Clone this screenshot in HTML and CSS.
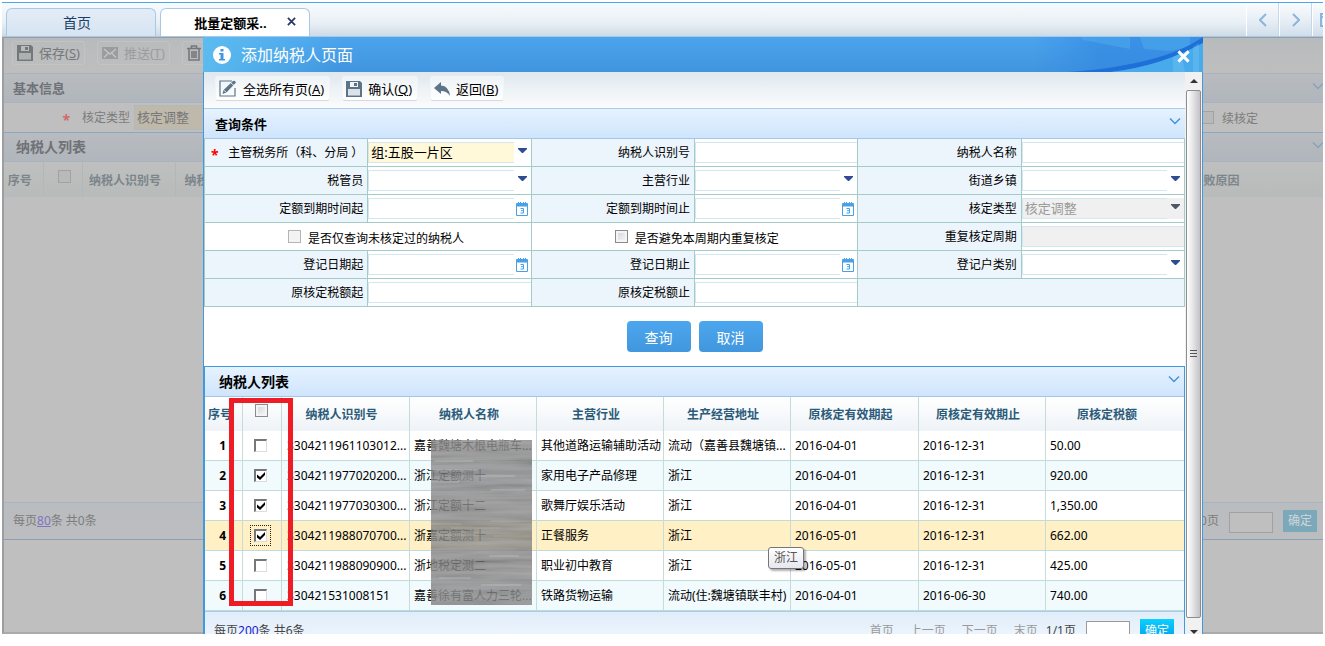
FILE: index.html
```html
<!DOCTYPE html>
<html lang="zh-CN">
<head>
<meta charset="utf-8">
<title>批量定额采集</title>
<link rel="stylesheet" href="styles.css">
</head>
<body>
<svg class="defs" aria-hidden="true">
  <symbol id="i-save" viewBox="0 0 16 16"><path fill="currentColor" fill-rule="evenodd" d="M0 0h14l2 2v14H0zM4 1v5h8V1zM2 8v6.500h12V8z"/><path fill="currentColor" d="M8 2h3v3H8z"/><path fill="currentColor" fill-opacity=".18" d="M2 8h12v6.500H2z"/></symbol>
  <symbol id="i-mail" viewBox="0 0 16 12"><path fill="currentColor" d="M0 0h16v12H0z"/><path fill="none" stroke="#c4c4c4" stroke-width="1.4" d="M2 2l6 5 6-5M2 10.500l4-4M14 10.500l-4-4"/></symbol>
  <symbol id="i-trash" viewBox="0 0 14 16"><path fill="none" stroke="currentColor" stroke-width="1.600" d="M0 3.500h14M4.500 3V1h5v2M2 4v11h10V4M5 6v7M7 6v7M9 6v7"/></symbol>
  <symbol id="i-chev" viewBox="0 0 12 8"><path fill="none" stroke="currentColor" stroke-width="1.500" d="M1 1.500l5 5 5-5"/></symbol>
  <symbol id="i-drop" viewBox="0 0 9 5"><path fill="currentColor" d="M0 0h9v1L5 5H4L0 1z"/></symbol>
  <symbol id="i-cal" viewBox="0 0 12 14"><path fill="#4aa0e6" d="M0 2q0-1 1-1h1V0h1v1h1V0h1v1h2V0h1v1h1V0h1v1h1q1 0 1 1v11q0 1-1 1H1q-1 0-1-1z"/><path fill="#fff" d="M1 4.500h10V13H1z"/><path fill="none" stroke="#4aa0e6" d="M4.500 6.500h3v4.500h-3M5 8.700h2.500"/></symbol>
  <symbol id="i-edit" viewBox="0 0 18 17"><path fill="none" stroke="currentColor" stroke-width="1.200" d="M13 1H1v15h15V8"/><path fill="currentColor" d="M3.500 14l1-4 9.500-9q2-1 3 1.500L7.500 12.500z"/><path stroke="#fff" stroke-width=".8" d="M4.500 10l3 2.500M12 3l3 2.500"/></symbol>
  <symbol id="i-back" viewBox="0 0 16 14"><path fill="currentColor" d="M7 0v3.500q8 .5 9 10.500-3-5-9-5V12L0 6z"/></symbol>
</svg>

<div class="app">
  <nav class="tabs">
    <button class="tab">首页</button>
    <button class="tab active"><span>批量定额采..</span>
      <svg class="tab-x" viewBox="0 0 10 10"><path stroke="#2a3a64" stroke-width="2" d="M1 1l8 8M9 1L1 9"/></svg></button>
    <div class="tab-nav">
      <button aria-label="向左"><svg viewBox="0 0 8 14"><path d="M7 1L1 7l6 6"/></svg></button>
      <button aria-label="向右"><svg viewBox="0 0 8 14"><path d="M1 1l6 6-6 6"/></svg></button>
      <button class="cut" aria-label="窗口"><svg viewBox="0 0 12 14"><path d="M1 1h10v12H1zM1 4h10"/></svg></button>
    </div>
  </nav>

  <main class="page">
    <div class="page-tools">
      <button><svg width="16" height="16"><use href="#i-save"/></svg><span>保存(<u>S</u>)</span></button>
      <button class="off"><svg width="16" height="12"><use href="#i-mail"/></svg><span>推送(<u>T</u>)</span></button>
      <button aria-label="删除"><svg width="14" height="16"><use href="#i-trash"/></svg></button>
    </div>
    <h2 class="page-head small">基本信息<svg width="12" height="8"><use href="#i-chev"/></svg></h2>
    <div class="page-form">
      <label for="bg-type"><b class="star">*</b>核定类型</label>
      <input id="bg-type" value="核定调整">
      <label class="cont"><input type="checkbox" class="box">续核定</label>
    </div>
    <h2 class="page-head list-head">纳税人列表<svg width="12" height="8"><use href="#i-chev"/></svg></h2>
    <table class="page-table">
      <colgroup><col class="b1"><col class="b2"><col class="b3"><col class="b4"><col><col class="b5"></colgroup>
      <tr><th>序号</th><th><input type="checkbox" class="box" aria-label="全选"></th><th>纳税人识别号</th><th>纳税人名称</th><th></th><th class="last">失败原因</th></tr>
    </table>
    <div class="page-blank"></div>
    <div class="page-pager">
      <span>每页<a href="#">80</a>条 共0条</span>
      <label for="bg-go">0/0页</label><input id="bg-go"><button>确定</button>
    </div>
    <div class="page-rest"></div>
  </main>

  <section class="dialog">
    <header class="title">
      <svg class="title-art" viewBox="0 0 170 35" preserveAspectRatio="none">
        <linearGradient id="fade"><stop offset="0" stop-color="#2f85e0" stop-opacity="0"/><stop offset=".4" stop-color="#2f85e0" stop-opacity=".6"/></linearGradient>
        <path fill="url(#fade)" d="M0 0h170v35H0z"/>
        <path fill="#56b3f0" fill-opacity=".4" d="M48 0h49v12L50 3zM107 0h50v10l-20 4-26-2z"/>
        <path fill="#1f6fd8" d="M36 35Q130 28 170 0v6Q128 29 78 35z"/>
        <path fill="#4cb2ee" fill-opacity=".8" d="M78 35Q128 29 170 6v29z"/>
        <path fill="#8fd4f8" fill-opacity=".25" d="M140 20l8-4 4 19h-12zM160 10l6-4v29h-6z"/>
      </svg>
      <svg class="info" viewBox="0 0 18 18"><circle cx="9" cy="9" r="9" fill="#fff"/><path fill="#3f97df" d="M7.500 3h3v2.500h-3zM6 7h4.500v6H12v1.500H6V13h1.500V8.500H6z"/></svg>
      <h1>添加纳税人页面</h1>
      <button class="close" aria-label="关闭"><svg viewBox="0 0 14 14"><path stroke="#fff" stroke-width="3.200" d="M1.500 1.500l11 11M12.500 1.500l-11 11"/></svg></button>
    </header>
    <div class="frame">
      <div class="content">
        <div class="tools">
          <button><svg width="18" height="17"><use href="#i-edit"/></svg><span>全选所有页(<u>A</u>)</span></button>
          <button><svg width="16" height="16"><use href="#i-save"/></svg><span>确认(<u>Q</u>)</span></button>
          <button><svg width="16" height="14"><use href="#i-back"/></svg><span>返回(<u>B</u>)</span></button>
        </div>
        <h2 class="head">查询条件<svg width="12" height="8"><use href="#i-chev"/></svg></h2>

        <form class="query">
          <label class="lab" for="q1"><b class="star">*</b>主管税务所（科、分局 ）</label>
          <div class="fld need"><select id="q1"><option>组:五股一片区</option></select><svg class="drop"><use href="#i-drop"/></svg></div>
          <label class="lab" for="q2">纳税人识别号</label><div class="fld"><input id="q2"></div>
          <label class="lab" for="q3">纳税人名称</label><div class="fld"><input id="q3"></div>

          <label class="lab" for="q4">税管员</label><div class="fld"><select id="q4"><option></option></select><svg class="drop"><use href="#i-drop"/></svg></div>
          <label class="lab" for="q5">主营行业</label><div class="fld"><select id="q5"><option></option></select><svg class="drop"><use href="#i-drop"/></svg></div>
          <label class="lab" for="q6">街道乡镇</label><div class="fld"><select id="q6"><option></option></select><svg class="drop"><use href="#i-drop"/></svg></div>

          <label class="lab" for="q7">定额到期时间起</label><div class="fld"><input id="q7"><svg class="cal"><use href="#i-cal"/></svg></div>
          <label class="lab" for="q8">定额到期时间止</label><div class="fld"><input id="q8"><svg class="cal"><use href="#i-cal"/></svg></div>
          <label class="lab" for="q9">核定类型</label><div class="fld dis"><select id="q9" disabled><option>核定调整</option></select><svg class="drop"><use href="#i-drop"/></svg></div>

          <label class="chk"><input type="checkbox" class="box pale">是否仅查询未核定过的纳税人</label>
          <label class="chk"><input type="checkbox" class="box">是否避免本周期内重复核定</label>
          <label class="lab" for="q10">重复核定周期</label><div class="fld dis"><input id="q10" disabled></div>

          <label class="lab" for="q11">登记日期起</label><div class="fld"><input id="q11"><svg class="cal"><use href="#i-cal"/></svg></div>
          <label class="lab" for="q12">登记日期止</label><div class="fld"><input id="q12"><svg class="cal"><use href="#i-cal"/></svg></div>
          <label class="lab" for="q13">登记户类别</label><div class="fld"><select id="q13"><option></option></select><svg class="drop"><use href="#i-drop"/></svg></div>

          <label class="lab" for="q14">原核定税额起</label><div class="fld"><input id="q14"></div>
          <label class="lab" for="q15">原核定税额止</label><div class="fld"><input id="q15"></div>
          <div class="void"></div>
        </form>

        <div class="actions"><button>查询</button><button>取消</button></div>

        <div class="list">
          <h2 class="head big">纳税人列表<svg width="12" height="8"><use href="#i-chev"/></svg></h2>
          <div class="grid">
            <table>
              <colgroup><col class="c1"><col class="c2"><col class="c3"><col class="c4"><col class="c4"><col class="c4"><col class="c3"><col class="c4"><col></colgroup>
              <thead><tr><th class="no">序号</th><th class="pick"><input type="checkbox" class="box" aria-label="全选"></th><th>纳税人识别号</th><th>纳税人名称</th><th>主营行业</th><th>生产经营地址</th><th>原核定有效期起</th><th>原核定有效期止</th><th>原核定税额</th></tr></thead>
              <tbody>
                <tr><td>1</td><td><input type="checkbox" aria-label="第1行"></td><td>3304211961103012...</td><td>嘉善魏塘木根电瓶车...</td><td>其他道路运输辅助活动</td><td>流动（嘉善县魏塘镇...</td><td>2016-04-01</td><td>2016-12-31</td><td>50.00</td></tr>
                <tr><td>2</td><td><input type="checkbox" checked aria-label="第2行"></td><td>3304211977020200...</td><td>浙江定额测十</td><td>家用电子产品修理</td><td>浙江</td><td>2016-04-01</td><td>2016-12-31</td><td>920.00</td></tr>
                <tr><td>3</td><td><input type="checkbox" checked aria-label="第3行"></td><td>3304211977030300...</td><td>浙江定额十二</td><td>歌舞厅娱乐活动</td><td>浙江</td><td>2016-04-01</td><td>2016-12-31</td><td>1,350.00</td></tr>
                <tr class="hot"><td>4</td><td><input type="checkbox" class="focus" checked aria-label="第4行"></td><td>3304211988070700...</td><td>浙嘉定额测十</td><td>正餐服务</td><td>浙江</td><td>2016-05-01</td><td>2016-12-31</td><td>662.00</td></tr>
                <tr><td>5</td><td><input type="checkbox" aria-label="第5行"></td><td>3304211988090900...</td><td>浙地税定测二</td><td>职业初中教育</td><td>浙江</td><td>2016-05-01</td><td>2016-12-31</td><td>425.00</td></tr>
                <tr><td>6</td><td><input type="checkbox" aria-label="第6行"></td><td>330421531008151</td><td>嘉善徐有富人力三轮...</td><td>铁路货物运输</td><td>流动(住:魏塘镇联丰村)</td><td>2016-04-01</td><td>2016-06-30</td><td>740.00</td></tr>
              </tbody>
            </table>
            <svg class="smear" aria-hidden="true">
              <filter id="streak" x="0" y="0" width="100%" height="100%"><feTurbulence type="fractalNoise" baseFrequency="0.012 0.16" numOctaves="3" seed="8"/><feColorMatrix values="1.1 0 0 0 -.05  1.1 0 0 0 -.05  1.1 0 0 0 -.05  0 0 0 0 1"/></filter>
              <rect width="100%" height="100%" fill="#787878" fill-opacity=".8"/>
              <rect width="100%" height="100%" filter="url(#streak)" opacity=".22"/>
              <path fill="none" stroke="#c6bd9c" stroke-opacity=".5" d="M0 84h30M20 88h50M60 81h42M8 95h40M62 96h40"/>
              <path fill="none" stroke="#ddd" stroke-opacity=".4" d="M4 21h38M2 30h44M48 36h36M0 42h28M60 50h34M58 116h30M8 138h32M50 145h40"/>
            </svg>
            <div class="mark"></div>
            <div class="tip">浙江</div>
          </div>
          <div class="pager">
            <span class="count">每页<a href="#">200</a>条 共6条</span>
            <button class="link">首页</button><button class="link">上一页</button><button class="link">下一页</button><button class="link">末页</button>
            <label for="go">1/1页</label><input id="go"><button class="ok">确定</button>
          </div>
        </div>
      </div>
      <div class="scroll"><i class="up"></i><div class="thumb"><i></i></div><i class="down"></i></div>
    </div>
  </section>
</div>
</body>
</html>
```
FILE: styles.css
```css
* { box-sizing: border-box; }
body, h1, h2 { margin: 0; }
body, button, input, select { font-family: "Noto Sans", "Noto Sans CJK SC", sans-serif; font-size: 12px; }
body { background: #fff; color: #000; line-height: 18px; }
button { border: 0; padding: 0; background: none; color: inherit; display: flex; align-items: center; line-height: 18px; white-space: nowrap; }
input, select { margin: 0; border-radius: 0; outline: 0; min-width: 0; }
.defs { display: none; }

.app { position: relative; display: flex; flex-direction: column; height: calc(100vh - 12px); margin: 0 2px; padding-top: 2px; }

/* tab strip */
.tabs { display: flex; align-items: flex-end; gap: 4px; height: 35px; flex: none; padding-left: 4px; border-top: 1px solid #4fa5ec; border-bottom: 1px solid #a5c9e8; background: linear-gradient(#f7fbfe, #e9f0f5 60%, #cddbe7); }
.tab { width: 150px; height: 28px; justify-content: center; padding-left: 0; padding-right: 8px; font-size: 14px; color: #1d3f66; border: 1px solid #a9c8e6; border-bottom: 0; border-radius: 6px 6px 0 0; background: linear-gradient(#e3edf7, #d6e3f1); }
.tab.active { background: #fff; color: #000; font-weight: 700; font-size: 13px; gap: 20px; padding: 0 0 0 20px; }
.tab-x { width: 9px; height: 9px; margin-bottom: 3px; }
.tab-nav { display: flex; align-self: stretch; margin-left: auto; }
.tab-nav button { width: 33px; justify-content: center; border-left: 1px solid #fff; border-right: 1px solid #c5d8ea; background: linear-gradient(#fafcfe, #e4ecf3 60%, #d0deec); }
.tab-nav svg { width: 8px; height: 14px; fill: none; stroke: #8db4dd; stroke-width: 2; }
.tab-nav .cut { width: 11px; overflow: hidden; justify-content: flex-start; padding-left: 7px; border-right: 0; }
.tab-nav .cut svg { width: 12px; flex: none; }

/* dimmed page below the dialog */
.page { flex: 1; display: flex; flex-direction: column; min-height: 0; background: #bfbfbf; color: #7c7c7c; border-left: 2px solid #9c9fa2; border-top: 1px solid #9c9c9c; border-bottom: 2px solid #aaa; overflow: hidden; }
.page-tools { display: flex; align-items: center; gap: 12px; height: 35px; padding: 0 0 5px 8px; background: linear-gradient(#b8bbbd, #bebebe); flex: none; }
.page-tools button { height: 24px; gap: 6px; padding: 0 4px; font-size: 13px; color: #75787b; border: 1px solid #c3c3c3; border-radius: 3px; }
.page-tools .off { color: #9c9c9c; }
.page-head { display: flex; justify-content: space-between; align-items: center; height: 30px; flex: none; padding-left: 9px; font-size: 13px; color: #6f7276; border-top: 1px solid #abb3bd; border-bottom: 1px solid #a9b2bd; background: linear-gradient(#b8bbbf, #b0b6bc); overflow: hidden; }
.page-head svg { color: #88a3ba; margin: -4px -1px 0 0; }
.page-head.list-head { padding-left: 12px; font-size: 14px; border-top-color: #8ea6bc; }
.page-form { display: flex; align-items: center; height: 29px; flex: none; }
.page-form label { width: 130px; display: flex; justify-content: flex-end; align-items: center; gap: 12px; padding-right: 4px; }
.page-form .star { color: #cf6d6d; }
.page-form > input { width: 160px; height: 25px; padding: 0 2px 2px; font-size: 13px; color: #777; background: #bfb9ac; border: 1px solid #aebabb; }
.page-form .cont { margin-left: auto; width: 122px; justify-content: flex-start; gap: 8px; padding-top: 3px; }
.page-form .cont input { margin-top: -3px; }
.page-table { width: 100%; table-layout: fixed; border-collapse: collapse; height: 35px; flex: none; background: linear-gradient(#bfbfbf, #b8bbbb); color: #7c858b; }
.page-table th { padding: 2px 7px 0 0; border-right: 1px solid #b0b8b8; white-space: nowrap; overflow: hidden; }
.page-table .last { text-align: left; border: 0; }
.page-table .box { display: block; margin: -8px 4px 0 auto; }
.b1 { width: 39px; } .b2 { width: 39px; } .b3 { width: 93px; } .b4 { width: 86px; } .b5 { width: 132px; }
.page-blank { flex: 0 0 306px; border-bottom: 1px solid #abb3bd; }
.page-pager { display: flex; align-items: center; height: 37px; flex: none; padding: 0 6px 0 9px; border-bottom: 1px solid #8ba0b7; background: linear-gradient(#b9bcc0, #bcbdbf); }
.page-pager a { color: #7d75bf; }
.page-pager label { margin-left: auto; }
.page-pager input { width: 44px; height: 21px; margin: 2px 10px 0; border: 1px solid #a1a1a1; background: #bfbfbf; }
.page-pager button { width: 34px; height: 22px; justify-content: center; background: #7ba9ba; color: #cfd6d9; }
.page-rest { flex: 1; }

/* checkboxes */
input[type=checkbox] { appearance: none; position: relative; display: block; width: 13px; height: 13px; flex: none; border: 1px solid #dcdcdc; border-top: 2px solid #777; border-left: 2px solid #777; background: #fff; }
input.box[type=checkbox] { border: 1px solid #8b8b8b; background: linear-gradient(135deg, #cfd3da, #fafafa); box-shadow: inset 0 0 0 2px #f4f4f4; }
input.box.pale[type=checkbox] { border-color: #b4b4b4; background: #f2f2f2; }
.page input.box[type=checkbox] { border-color: #a2a2a2; background: #b9b9b9; box-shadow: none; }
input[type=checkbox]:checked::before { content: ""; position: absolute; inset: 1px; background: #000; clip-path: polygon(0 30%, 38% 62%, 100% 0, 100% 38%, 38% 100%, 0 68%); }
.focus { outline: 1px dotted #222; outline-offset: 3px; }

/* dialog */
.dialog { position: absolute; top: 37px; right: 120px; bottom: -1px; left: 201px; display: flex; flex-direction: column; overflow: hidden; }
.title { position: relative; display: flex; align-items: center; height: 35px; flex: none; padding: 0 13px 0 10px; color: #fff; background: linear-gradient(100deg, #5cbcf0 0, rgba(92, 188, 240, 0) 14%), linear-gradient(#4ba4ee, #4195de); }
.title-art { position: absolute; right: 0; top: 0; width: 170px; height: 35px; }
.info { width: 18px; height: 18px; margin-right: 10px; }
.title h1 { font-size: 16px; font-weight: 400; line-height: 24px; }
.close { position: relative; margin: 3px 0 0 auto; }
.close svg { width: 13px; height: 13px; }
.frame { flex: 1; min-height: 0; display: flex; background: #fff; border-left: 1px solid #4098de; border-right: 1px solid #4098de; }
.content { flex: 1; min-width: 0; overflow: hidden; }
.tools { display: flex; align-items: center; gap: 12px; height: 37px; padding: 0 0 3px 11px; border-bottom: 1px solid #abcbec; background: linear-gradient(#dfe8ee, #fbfcfd); }
.tools button { height: 25px; gap: 6px; padding: 0 5px 0 3px; font-size: 13px; border-radius: 3px; border: 1px solid #f1f5f7; border-bottom-color: #d6dadd; background: linear-gradient(#eef3f6, #fff); }
.tools svg { color: #5b7488; }
.head { display: flex; align-items: center; justify-content: space-between; height: 30px; padding: 0 4px 0 11px; font-size: 13px; border-bottom: 1px solid #a2c7e8; background: linear-gradient(#e6f2ff, #cfe5fc); }
.head svg { color: #3f97de; margin-top: -6px; }
.head.big { padding-left: 14px; font-size: 14px; }

.query { display: grid; grid-template-columns: repeat(6, 1fr); grid-auto-rows: 28px; border-right: 1px solid #a3cbc7; }
.query > * { border-bottom: 1px solid #a3cbc7; border-left: 1px solid #a3cbc7; min-width: 0; }
.lab { display: flex; align-items: center; justify-content: flex-end; padding-right: 4px; background: #edf5fc; white-space: nowrap; }
.star { color: #f00; font-size: 14px; font-weight: 700; line-height: 12px; padding-top: 5px; }
.lab .star { margin: 0 auto 0 6px; }
.fld { display: flex; align-items: center; }
.fld input, .fld select { flex: 1; height: 21px; width: 0; padding: 0 2px; font-size: 13px; color: #000; appearance: none; background: #fff; border: 1px solid #d4e6ee; border-right: 0; }
.fld select { padding-bottom: 2px; }
.need select { background: #fff8d9; }
.fld.dis { background: linear-gradient(#fff 3px, #f0f0f0 3px, #f0f0f0 24px, #fff 24px); }
.dis input, .dis select { background: #f0f0f0; color: #9b9b9b; opacity: 1; }
.drop { width: 9px; height: 5px; margin: -5px 4px 0; color: #2d4c91; }
.dis .drop { color: #4f5563; }
.cal { width: 12px; height: 14px; margin: 0 3px 0 2px; }
.chk { grid-column: span 2; display: flex; align-items: center; gap: 7px; padding-left: 83px; padding-top: 4px; }
.chk input { margin-top: -4px; }
.void { grid-column: span 2; background: #edf5fc; }

.actions { display: flex; justify-content: center; gap: 8px; padding: 14px 0; }
.actions button { width: 64px; height: 31px; justify-content: center; padding-top: 2px; font-size: 14px; color: #fff; border-radius: 4px; background: linear-gradient(#4ca6ef, #4197dc); }

.list { border: 1px solid #4098de; border-bottom: 0; }
.grid { position: relative; }
.grid table { width: 100%; table-layout: fixed; border-collapse: separate; border-spacing: 0; }
.grid th, .grid td { padding: 0 0 0 4px; overflow: hidden; white-space: nowrap; border-right: 1px solid #c5dcd8; }
.grid th:last-child, .grid td:last-child { border-right: 0; }
.grid thead th { height: 34px; padding: 2px 8px 0 0; color: #2b5b79; background: linear-gradient(#fff, #eef3f7); }
.grid thead th:last-child { padding-right: 16px; }
.grid thead .no { text-align: left; padding: 2px 0 0 3px; }
.grid thead .pick { padding: 0 2px 0 0; }
.pick input { margin: -8px auto 0; }
.grid td { height: 30px; border-bottom: 1px solid #bfdcd8; text-align: left; }
.grid td:first-child { text-align: right; font-weight: 700; padding-right: 16px; }
.grid td:nth-child(2) { padding: 0 3px 0 0; }
.grid td:nth-child(3) { padding-left: 5px; }
.grid td input { margin: 0 auto; }
.grid tbody tr:nth-child(even) { background: #f1fafd; }
.grid tbody tr.hot { background: #fff0c6; }
.c1 { width: 38px; } .c2 { width: 39px; } .c3 { width: 128px; } .c4 { width: 127px; }
.smear { position: absolute; left: 226px; top: 43px; width: 101px; height: 165px; }
.mark { position: absolute; left: 24px; top: 1px; width: 64px; height: 208px; border: 5px solid #ee1c25; }
.tip { position: absolute; left: 563px; top: 150px; padding: 1px 5px; color: #555; border: 1px solid #767676; border-radius: 3px; background: linear-gradient(#fff, #e6e7f0); box-shadow: 2px 2px 2px rgba(0, 0, 0, .3); }
.pager { display: flex; align-items: center; height: 38px; padding: 0 10px 0 9px; color: #444; border-top: 1px solid #a9cbe8; background: linear-gradient(#e0edfa, #f4f9fe); }
.pager a { color: #1414d8; text-decoration: none; }
.count { margin-right: auto; }
.link { color: #9a9a9a; margin-right: 16px; }
.link:nth-of-type(4) { margin-right: 8px; }
.pager input { width: 44px; height: 20px; margin: 0 10px; border: 1px solid #9b9b9b; background: #fff; }
.ok { width: 34px; height: 23px; justify-content: center; color: #fff; background: linear-gradient(#0bd0ff, #0098e8); }

.scroll { display: flex; flex-direction: column; align-items: center; width: 17px; flex: none; padding-bottom: 1px; background: #f1f1f1; }
.scroll .up, .scroll .down { border: 4px solid transparent; height: 0; }
.scroll .up { border-top: 0; border-bottom-color: #333; margin: 7px 0; }
.scroll .down { border-bottom: 0; border-top-color: #333; margin-top: 12px; }
.thumb { flex: 1; width: 15px; display: flex; align-items: center; justify-content: center; border: 1px solid #8d8d8d; border-radius: 2px; background: linear-gradient(90deg, #fff, #e6e6e8 45%, #c2c2c8); }
.thumb i { width: 7px; height: 8px; background: repeating-linear-gradient(#555 0 1px, transparent 1px 3px); }
```
